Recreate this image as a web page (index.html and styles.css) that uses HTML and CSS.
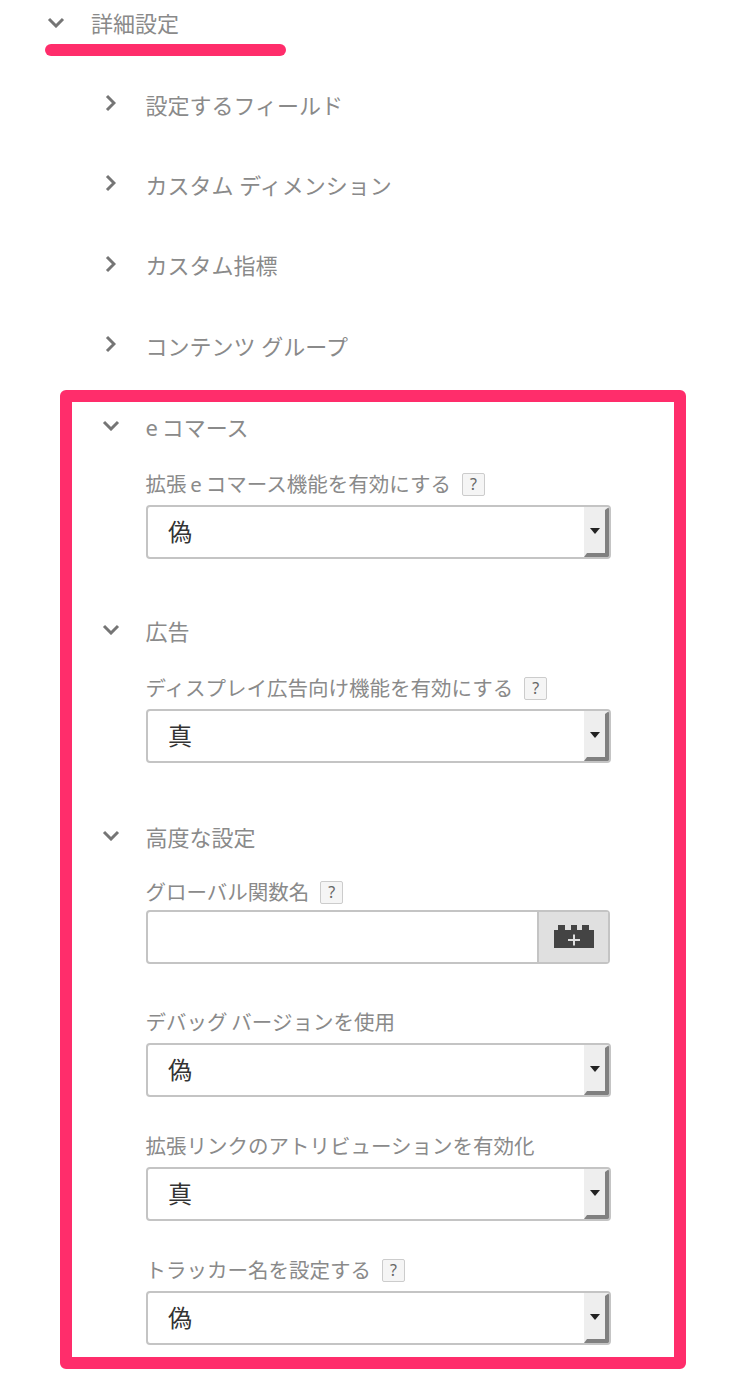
FILE: index.html
```html
<!doctype html>
<html lang="ja">
<head>
    <meta charset="UTF-8">
    <title>詳細設定</title>
    <link rel="stylesheet" href="styles.css">
</head>
<body>
<div class="top">
    <svg class="chev-top" viewBox="0 0 18 11"><path d="M2 2l7 7 7-7"/></svg>
    <span>詳細設定</span>
</div>
<div class="underline"></div>

<div class="list">
    <div class="row"><svg class="chev-right" viewBox="0 0 11 18"><path d="M2 2l7 7-7 7"/></svg><span>設定するフィールド</span></div>
    <div class="row"><svg class="chev-right" viewBox="0 0 11 18"><path d="M2 2l7 7-7 7"/></svg><span>カスタム ディメンション</span></div>
    <div class="row"><svg class="chev-right" viewBox="0 0 11 18"><path d="M2 2l7 7-7 7"/></svg><span>カスタム指標</span></div>
    <div class="row"><svg class="chev-right" viewBox="0 0 11 18"><path d="M2 2l7 7-7 7"/></svg><span>コンテンツ グループ</span></div>
</div>

<div class="box">
    <div class="head"><svg class="chev-down" viewBox="0 0 18 11"><path d="M2 2l7 7 7-7"/></svg><span class="ecom">e コマース</span></div>
    <div class="label"><span>拡張 e コマース機能を有効にする</span><i class="help">?</i></div>
    <div class="select"><span class="val">偽</span><b class="arrow"></b></div>

    <div class="head sec"><svg class="chev-down" viewBox="0 0 18 11"><path d="M2 2l7 7 7-7"/></svg><span>広告</span></div>
    <div class="label"><span>ディスプレイ広告向け機能を有効にする</span><i class="help">?</i></div>
    <div class="select"><span class="val">真</span><b class="arrow"></b></div>

    <div class="head sec3"><svg class="chev-down" viewBox="0 0 18 11"><path d="M2 2l7 7 7-7"/></svg><span>高度な設定</span></div>
    <div class="label tight"><span>グローバル関数名</span><i class="help">?</i></div>
    <div class="input">
        <div class="blank"></div>
        <div class="var-btn">
            <svg width="40" height="24" viewBox="0 0 40 24">
                <path class="brick" d="M0 5h4V0h7v5h6V0h6v5h5V0h7v5h5v18H0z"/>
                <path class="plus" d="M14 15h12M20 9.500v11"/>
            </svg>
        </div>
    </div>

    <div class="label field"><span>デバッグ バージョンを使用</span></div>
    <div class="select"><span class="val">偽</span><b class="arrow"></b></div>

    <div class="label field2"><span>拡張リンクのアトリビューションを有効化</span></div>
    <div class="select"><span class="val">真</span><b class="arrow"></b></div>

    <div class="label field2"><span>トラッカー名を設定する</span><i class="help">?</i></div>
    <div class="select"><span class="val">偽</span><b class="arrow"></b></div>
</div>
</body>
</html>
```

FILE: styles.css
```css
*{
    margin: 0;
    padding: 0;
    box-sizing: border-box;
}

body{
    background-color: #fff;
    color: #8a8a8a;
    font-family: "Noto Sans", "Noto Sans CJK JP", sans-serif;
    font-size: 22px;
}

svg path{
    fill: none;
}

.chev-top path, .chev-right path, .chev-down path{
    stroke: #757575;
    stroke-width: 3;
}

.top{
    display: flex;
    align-items: center;
    height: 44px;
    padding-left: 47px;
}
.top span{
    margin-left: 26px;
}
.chev-top{
    width: 18px;
    height: 11px;
}

.underline{
    width: 241px;
    height: 12px;
    margin-left: 45px;
    background-color: #ff2d6b;
    border-radius: 6px;
}

.list{
    padding-top: 9px;
    padding-left: 105px;
}
.row{
    display: flex;
    align-items: center;
    height: 80.33px;
}
.row span{
    margin-left: -0.5px;
    padding-bottom: 3px;
}
.chev-right{
    width: 11px;
    height: 18px;
    margin-top: -4px;
    margin-right: 30px;
}

.box{
    width: 626px;
    height: 979px;
    margin-top: 4px;
    margin-left: 60px;
    padding-left: 30px;
    border: 12px solid #ff2d6b;
    border-radius: 6px;
}

.head{
    display: flex;
    align-items: center;
    height: 50px;
}
.head span{
    margin-left: -0.5px;
    padding-bottom: 3px;
}
.head .ecom{
    word-spacing: -2px;
}
.head.sec{
    margin-top: 47px;
}
.head.sec3{
    margin-top: 49px;
}
.chev-down{
    width: 18px;
    height: 11px;
    margin-top: -4px;
    margin-right: 26px;
}

.label{
    display: flex;
    align-items: center;
    height: 28px;
    margin-top: 18px;
    margin-left: 43.5px;
    font-size: 20.5px;
    word-spacing: -1.5px;
}
.label span{
    padding-bottom: 2px;
}
.label.tight{
    margin-top: 16px;
}
.label.field{
    margin-top: 44px;
}
.label.field2{
    margin-top: 35px;
}
.help{
    width: 23px;
    height: 23px;
    margin-left: 11px;
    background-color: #f5f5f5;
    border: 1px solid #ccc;
    border-radius: 2px;
    color: #666;
    font-size: 16px;
    font-style: normal;
    line-height: 21px;
    text-align: center;
}

.select{
    display: flex;
    justify-content: space-between;
    width: 465.500px;
    height: 54px;
    margin-top: 7px;
    margin-left: 43.5px;
    border: 2px solid #c4c4c4;
    border-radius: 4px;
    overflow: hidden;
}
.val{
    padding-left: 20.5px;
    color: #333;
    font-size: 24px;
    line-height: 50px;
}
.arrow{
    position: relative;
    width: 25px;
    border-style: solid;
    border-width: 3px 4px 4px 3px;
    border-color: #eee #808080 #808080 #eee;
    background-color: #eee;
}
.arrow:after{
    content: "";
    position: absolute;
    left: 3px;
    top: 18px;
    border-style: solid;
    border-width: 6px 5.500px 0;
    border-color: #222 transparent transparent;
}

.input{
    display: flex;
    width: 464.500px;
    height: 54px;
    margin-top: 4px;
    margin-left: 43.5px;
    border: 2px solid #c4c4c4;
    border-radius: 4px;
}
.blank{
    flex: 1;
}
.var-btn{
    display: flex;
    align-items: center;
    justify-content: center;
    width: 71px;
    background-color: #e0e0e0;
    border-left: 2px solid #c4c4c4;
}
.brick{
    fill: #444;
}
.plus{
    stroke: #e0e0e0;
    stroke-width: 2;
}
```
